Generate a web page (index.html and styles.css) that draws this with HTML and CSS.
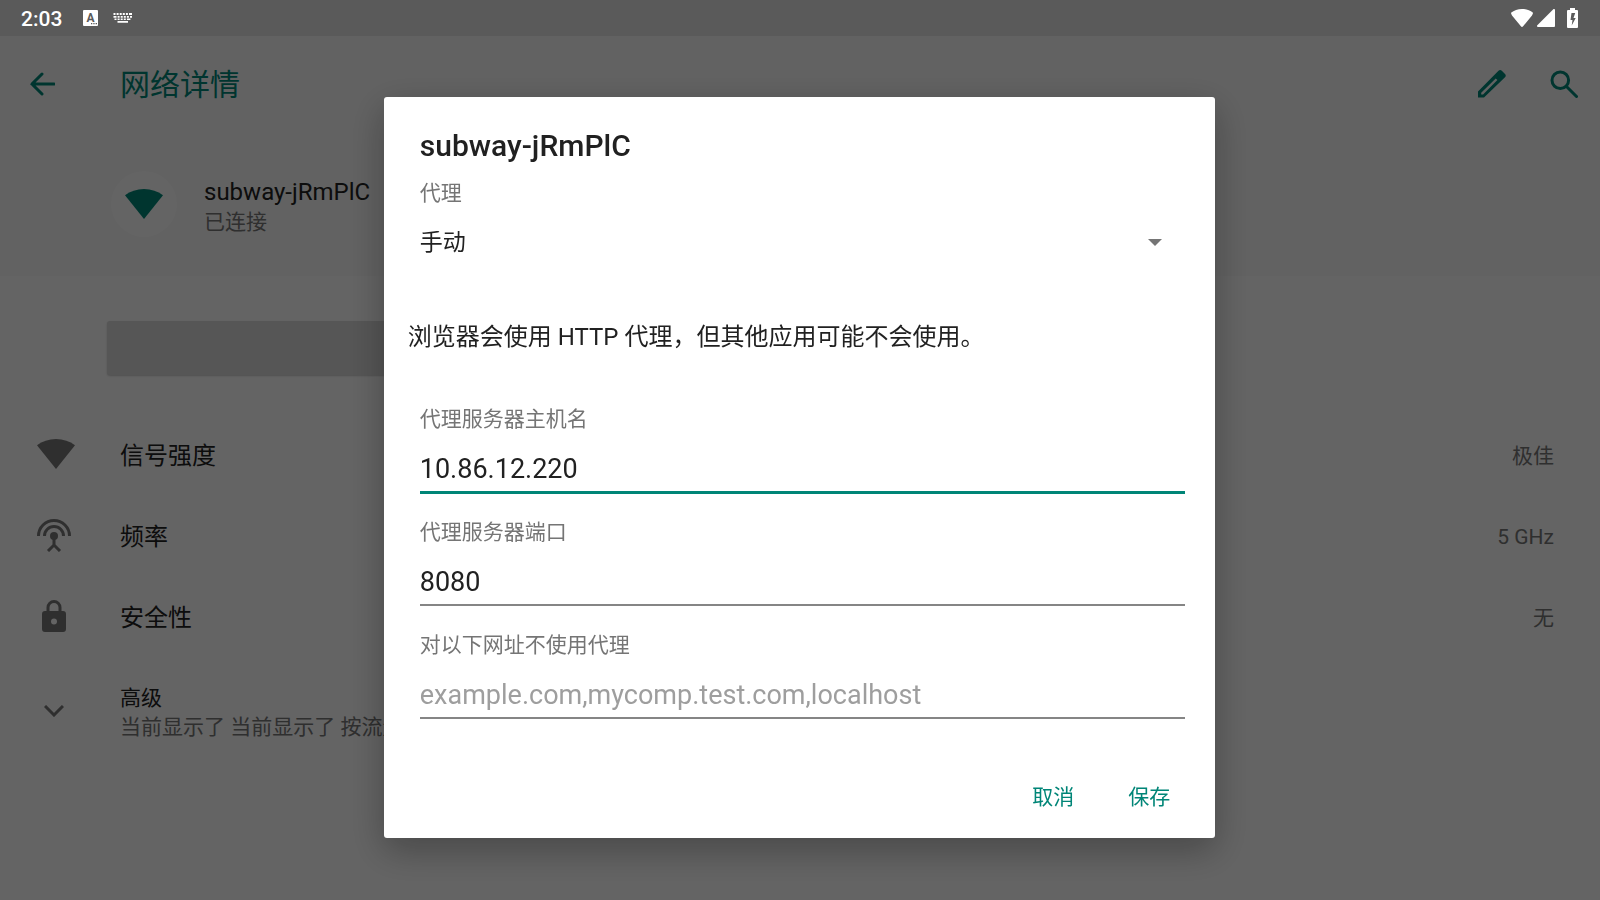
FILE: index.html
```html
<!DOCTYPE html>
<html lang="zh-CN">
<head>
<meta charset="utf-8">
<title>网络详情</title>
<link rel="stylesheet" href="styles.css">
</head>
<body>
<div class="screen">
  <header class="statusbar">
    <span class="clock">2:03</span>
    <span class="ime-badge">A<svg class="ime-dots" viewBox="0 0 6 2"><path d="M0 0h1.3v1.3H0zM2.3 0h1.3v1.3H2.3zM4.6 0H6v1.3H4.6z"/></svg></span>
    <svg class="ic-keyboard" viewBox="0 0 20 10"><path d="M.5 0h2v2h-2zM3.6 0h2v2h-2zM6.7 0h2v2h-2zM9.8 0h2v2h-2zM12.9 0h2v2h-2zM16 0h3v2h-3zM.5 3h3v1.700h-3zM4.600 3h2v1.700h-2zM7.700 3h2v1.700h-2zM10.800 3h2v1.700h-2zM13.900 3h2v1.700h-2zM17 3h2v1.700h-2zM1.500 5.500h2v1.500h-2zM4.600 5.500h2v1.500h-2zM7.700 5.500h2v1.500h-2zM10.800 5.500h2v1.500h-2zM13.900 5.500h3.500v1.500h-3.500zM4.500 8h10.500v1.700H4.500z"/></svg>
    <span class="status-icons">
      <svg class="ic-status-wifi" viewBox="0 0 22 18"><path d="M11 0C6.800 0 3 1.400 0 3.800c.2 1.300.5 2 1.200 2.900L9.900 17.300c.6.8 1.600.8 2.200 0L20.800 6.700c.7-.9 1-1.600 1.200-2.900C19 1.400 15.200 0 11 0z"/></svg>
      <svg class="ic-signal" viewBox="0 0 18 18"><path d="M18 1v16a1 1 0 0 1-1 1H1c-1 0-1.300-1-.7-1.700l16-16C17-.3 18 0 18 1z"/></svg>
      <svg class="ic-battery" viewBox="0 0 11 20"><path fill-rule="evenodd" d="M3 0h5v2h2a1 1 0 0 1 1 1v16a1 1 0 0 1-1 1H1a1 1 0 0 1-1-1V3a1 1 0 0 1 1-1h2zM4.500 5 3.500 12h2L4.700 17.500 8.700 10H6.500L8.200 5z"/></svg>
    </span>
  </header>

  <main class="page">
    <section class="top">
      <div class="toolbar">
        <button class="icon-btn back" aria-label="返回"><svg viewBox="0 0 26 24"><path class="line" d="M25 12H3M13 2 3 12l10 10"/></svg></button>
        <h1 class="page-title">网络详情</h1>
        <button class="icon-btn edit" aria-label="修改"><svg viewBox="0 0 28 28"><path fill-rule="evenodd" d="M0 21.500V27.400h6L27 7.300c1-1 1-2.300 0-3.300L23.800.8c-1-1-2.300-1-3.300 0zM3.200 22.800 17.700 8.400l1.700 1.700L5.100 24.500H3.200z"/></svg></button>
        <button class="icon-btn find" aria-label="搜索"><svg viewBox="0 0 28 28"><circle class="line" cx="10.300" cy="10.300" r="8.300"/><path class="line" d="m17 17 9.500 9.500"/></svg></button>
      </div>
      <div class="network">
        <span class="avatar"><svg viewBox="0 0 38 30"><path d="M19 0C11.600 0 5.400 2.300 0 6.200L19 30 38 6.200C32.600 2.300 26.400 0 19 0z"/></svg></span>
        <div class="network-text">
          <h2 class="network-name">subway-jRmPlC</h2>
          <p class="network-state">已连接</p>
        </div>
      </div>
    </section>

    <div class="forget"></div>

    <ul class="details">
      <li class="row">
        <span class="row-icon"><svg class="ic-wifi" viewBox="0 0 38 30"><path d="M19 0C11.600 0 5.400 2.300 0 6.200L19 30 38 6.200C32.600 2.300 26.400 0 19 0z"/></svg></span>
        <span class="row-title">信号强度</span><span class="row-value">极佳</span>
      </li>
      <li class="row">
        <span class="row-icon"><svg class="ic-antenna" viewBox="0 0 34 34"><path class="stroke" d="M1.500 18a15.500 15.500 0 0 1 31 0M7.500 18a9.500 9.500 0 0 1 19 0M17 18v9M11 33l6-6 6 6"/><circle cx="17" cy="18" r="4"/></svg></span>
        <span class="row-title">频率</span><span class="row-value">5 GHz</span>
      </li>
      <li class="row">
        <span class="row-icon"><svg class="ic-lock" viewBox="0 0 24 32"><path class="stroke" d="M6 12V7.500a6 6 0 0 1 12 0V12"/><path fill-rule="evenodd" d="M3 11h18a3 3 0 0 1 3 3v15a3 3 0 0 1-3 3H3a3 3 0 0 1-3-3V14a3 3 0 0 1 3-3zm9 7.500a3 3 0 1 0 0 6 3 3 0 0 0 0-6z"/></svg></span>
        <span class="row-title">安全性</span><span class="row-value">无</span>
      </li>
      <li class="row advanced">
        <span class="row-icon"><svg class="ic-chevron" viewBox="0 0 20 12"><path class="stroke" d="m1 1 9 9 9-9"/></svg></span>
        <div class="advanced-text">
          <p class="advanced-title">高级</p>
          <p class="advanced-summary">当前显示了 当前显示了 按流量计费</p>
        </div>
      </li>
    </ul>
  </main>

  <div class="scrim">
    <form class="dialog" role="dialog" aria-labelledby="dialog-title">
      <h2 class="dialog-title" id="dialog-title">subway-jRmPlC</h2>
      <label class="label" for="proxy">代理</label>
      <div class="select-wrap">
        <select class="select" id="proxy"><option>手动</option></select>
        <svg class="select-arrow" viewBox="0 0 14 7"><path d="M0 0h14L7 7z"/></svg>
      </div>
      <p class="message">浏览器会使用 HTTP 代理，但其他应用可能不会使用。</p>
      <div class="fields">
        <div class="field">
          <label class="label" for="host">代理服务器主机名</label>
          <input class="input active" id="host" type="text" value="10.86.12.220">
        </div>
        <div class="field">
          <label class="label" for="port">代理服务器端口</label>
          <input class="input" id="port" type="text" value="8080">
        </div>
        <div class="field">
          <label class="label" for="bypass">对以下网址不使用代理</label>
          <input class="input" id="bypass" type="text" placeholder="example.com,mycomp.test.com,localhost">
        </div>
      </div>
      <div class="actions">
        <button class="action" type="button">取消</button>
        <button class="action" type="button">保存</button>
      </div>
    </form>
  </div>
</div>
</body>
</html>
```

FILE: styles.css
```css
* { box-sizing: border-box; }

body {
  margin: 0;
  font-family: Roboto, "Noto Sans CJK SC", sans-serif;
  font-size: 21px;
  line-height: 24px;
  color: #212121;
}

h1, h2, p, ul { margin: 0; padding: 0; font-weight: 400; }
ul { list-style: none; }
svg { display: block; fill: currentColor; }
button, input, select { font: inherit; color: inherit; }
button { background: none; border: 0; padding: 0; }

.screen {
  min-height: 100vh;
  display: flex;
  flex-direction: column;
  background: #fafafa;
  overflow: hidden;
}

.statusbar {
  height: 36px;
  display: flex;
  align-items: center;
  padding: 0 22px 0 21px;
  background: #5a5a5a;
  color: #fff;
}
.clock { font-weight: 500; width: 62px; padding-top: 2px; }
.ime-badge {
  position: relative;
  width: 15px;
  height: 16px;
  margin-right: 15px;
  border-radius: 1px;
  background: #fff;
  color: #5a5a5a;
  font-size: 12px;
  font-weight: 700;
  line-height: 16px;
  text-align: center;
}
.ime-dots { position: absolute; right: 1px; bottom: 1px; width: 6px; height: 2px; }
.ic-keyboard { width: 20px; height: 10px; }
.status-icons { margin-left: auto; display: flex; align-items: center; }
.ic-status-wifi { width: 22px; height: 18px; margin-right: 4px; }
.ic-signal { width: 18px; height: 18px; margin-right: 12px; }
.ic-battery { width: 11px; height: 20px; }

.page { flex: 1; }
.top { background: #f5f5f5; padding-bottom: 39px; }
.toolbar {
  height: 96px;
  display: flex;
  align-items: center;
  padding: 0 22px 0 29px;
  color: #008577;
}
.icon-btn svg { width: 28px; height: 28px; }
.back { width: 91px; }
.back svg { width: 26px; height: 24px; }
.edit { margin-right: 44px; }
.line { fill: none; stroke: currentColor; stroke-width: 3; stroke-linecap: round; }
.page-title { flex: 1; padding-top: 2px; font-size: 30px; line-height: 36px; }

.network { display: flex; align-items: center; gap: 27px; padding: 39px 0 0 111px; }
.avatar {
  width: 66px;
  height: 66px;
  border-radius: 50%;
  background: #fafafa;
  color: #008577;
  display: grid;
  place-items: center;
}
.avatar svg { width: 38px; height: 30px; }
.network-text { padding-top: 5px; }
.network-name { font-size: 24px; line-height: 30px; }
.network-state { color: #757575; line-height: 30px; }

.forget {
  width: 38%;
  height: 54px;
  margin: 45px 0 40px 107px;
  border-radius: 3px;
  background: #d6d6d6;
  box-shadow: 0 1px 2px rgba(0, 0, 0, 0.2);
}

.row { display: flex; align-items: center; height: 81px; padding: 0 46px 0 37px; }
.row-icon { width: 83px; padding-bottom: 4px; color: #757575; }
.row-title { flex: 1; font-size: 24px; line-height: 30px; }
.row-value { color: #757575; }
.stroke { fill: none; stroke: currentColor; stroke-width: 3; }
.ic-wifi { width: 38px; height: 30px; }
.ic-antenna { width: 34px; height: 34px; }
.ic-lock { width: 24px; height: 32px; margin-left: 5px; }
.ic-chevron { width: 20px; height: 12px; margin-left: 7px; }
.advanced { height: 110px; }
.advanced-text { line-height: 29px; }
.advanced-summary { color: #757575; }

.scrim {
  position: fixed;
  inset: 36px 0 0;
  display: flex;
  align-items: center;
  justify-content: center;
  padding: 0 1px 2px 0;
  background: rgba(0, 0, 0, 0.6);
}
.dialog {
  width: 52%;
  padding: 31px 30px 17px 36px;
  border-radius: 3px;
  background: #fff;
  box-shadow: 0 12px 36px rgba(0, 0, 0, 0.3);
}
.dialog-title { font-size: 30px; line-height: 36px; font-weight: 500; margin-bottom: 17px; }
.label { display: block; color: #757575; }
.select-wrap { position: relative; margin: 19px 0 59px; }
.select {
  display: block;
  width: 100%;
  height: 36px;
  padding: 2px 0 0;
  border: 0;
  appearance: none;
  background: none;
  font-size: 23px;
}
.select-arrow {
  position: absolute;
  top: 15px;
  right: 23px;
  width: 14px;
  height: 7px;
  color: #757575;
  pointer-events: none;
}
.message { margin: 0 0 52px -12px; font-size: 24px; line-height: 36px; }
.fields { display: grid; gap: 26px; }
.field { min-height: 87px; }
.input {
  display: block;
  width: 100%;
  height: 49px;
  margin-top: 13px;
  padding: 4px 0 0;
  border: 0;
  border-bottom: 2px solid #858585;
  border-radius: 0;
  background: none;
  font-size: 27px;
  outline: 0;
}
.input.active { height: 50px; border-bottom: 3px solid #008577; }
.input::placeholder { color: #9e9e9e; opacity: 1; }
.actions { display: flex; justify-content: flex-end; margin: 53px -12px 0 0; }
.action { width: 96px; height: 48px; color: #008577; }
```
